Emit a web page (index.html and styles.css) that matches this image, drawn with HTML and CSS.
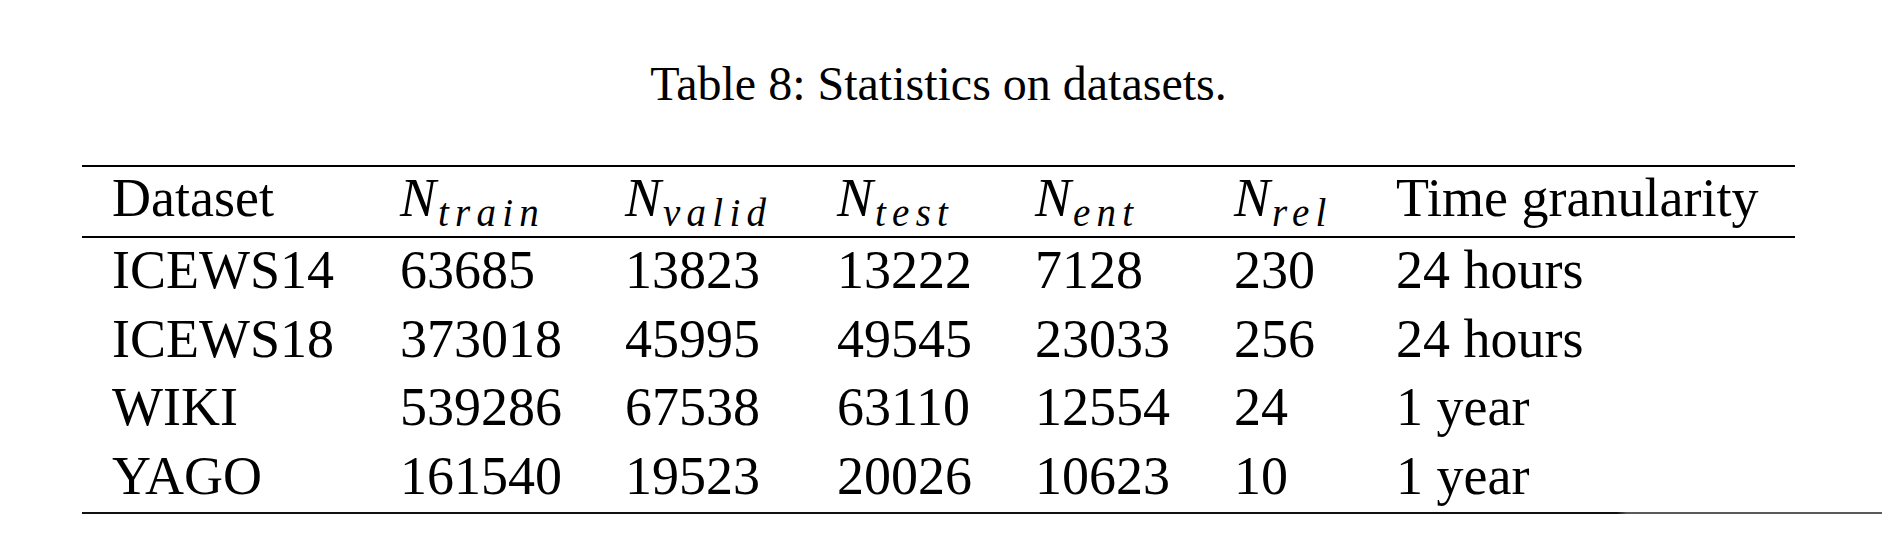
FILE: index.html
```html
<!DOCTYPE html>
<html lang="en">
<head>
<meta charset="utf-8">
<title>Table 8: Statistics on datasets.</title>
<link rel="stylesheet" href="styles.css">
</head>
<body>
<div class="page">
  <div class="caption">Table 8: Statistics on datasets.</div>
  <div class="table">
    <div class="rule rule-top"></div>
    <div class="row head">
      <div class="cell">Dataset</div>
      <div class="cell"><span class="m">N</span><span class="sub">train</span></div>
      <div class="cell"><span class="m">N</span><span class="sub">valid</span></div>
      <div class="cell"><span class="m">N</span><span class="sub">test</span></div>
      <div class="cell"><span class="m">N</span><span class="sub">ent</span></div>
      <div class="cell"><span class="m">N</span><span class="sub">rel</span></div>
      <div class="cell">Time granularity</div>
    </div>
    <div class="rule rule-mid"></div>
    <div class="row">
      <div class="cell">ICEWS14</div><div class="cell">63685</div><div class="cell">13823</div><div class="cell">13222</div><div class="cell">7128</div><div class="cell">230</div><div class="cell">24 hours</div>
    </div>
    <div class="row">
      <div class="cell">ICEWS18</div><div class="cell">373018</div><div class="cell">45995</div><div class="cell">49545</div><div class="cell">23033</div><div class="cell">256</div><div class="cell">24 hours</div>
    </div>
    <div class="row">
      <div class="cell">WIKI</div><div class="cell">539286</div><div class="cell">67538</div><div class="cell">63110</div><div class="cell">12554</div><div class="cell">24</div><div class="cell">1 year</div>
    </div>
    <div class="row">
      <div class="cell">YAGO</div><div class="cell">161540</div><div class="cell">19523</div><div class="cell">20026</div><div class="cell">10623</div><div class="cell">10</div><div class="cell">1 year</div>
    </div>
  </div>
  <div class="rule-bottom"></div>
</div>
</body>
</html>
```

FILE: styles.css
```css
html, body {
  margin: 0;
  padding: 0;
  background: #ffffff;
}

body {
  font-family: "Liberation Serif", "Times New Roman", serif;
  color: #000000;
  width: 1882px;
  height: 546px;
  overflow: hidden;
}

.page {
  padding-top: 56px;
}

.caption {
  font-size: 48px;
  line-height: 56px;
  height: 56px;
  margin-left: 82px;
  width: 1713px;
  text-align: center;
  margin-bottom: 53px;
}

.table {
  margin-left: 82px;
  width: 1713px;
}

.rule {
  background: #000000;
}

.rule-top {
  height: 2px;
}

.rule-mid {
  height: 2px;
}

.rule-bottom {
  margin-left: 82px;
  height: 2px;
  background: linear-gradient(to right, #111 0, #111 1535px, #5a5a5a 1545px, #5a5a5a 100%);
}

.row {
  display: grid;
  grid-template-columns: 318px 225px 212px 198px 199px 162px 1fr;
  font-size: 54px;
  line-height: 59.4px;
  padding-top: 3px;
  padding-bottom: 6px;
}

.head {
  padding-top: 2px;
  padding-bottom: 8px;
}

.row .cell:first-child {
  padding-left: 30px;
}

.cell {
  white-space: nowrap;
}

.m {
  font-style: italic;
}

.sub {
  font-style: italic;
  font-size: 39px;
  letter-spacing: 0.16em;
  line-height: 0;
  vertical-align: -10px;
  margin-left: 2px;
}
```
